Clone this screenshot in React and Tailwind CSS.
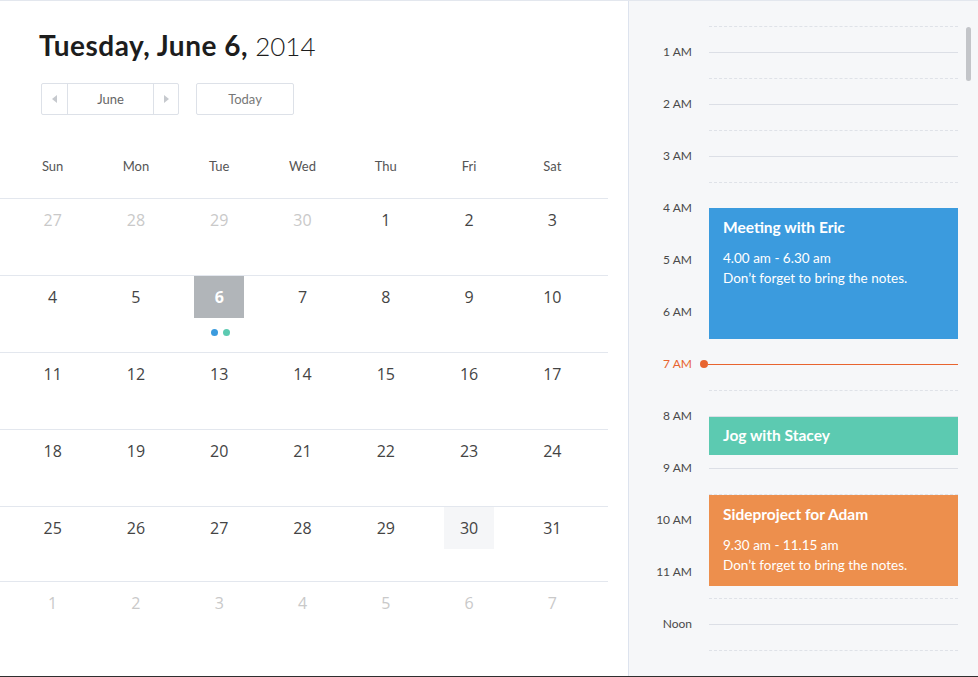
import React from 'react';

const weekdays = ['Sun', 'Mon', 'Tue', 'Wed', 'Thu', 'Fri', 'Sat'];

const weeks = [
    { h: 'h-[77px]', days: [[27, 'muted'], [28, 'muted'], [29, 'muted'], [30, 'muted'], [1], [2], [3]] },
    { h: 'h-[77px]', days: [[4], [5], [6, 'selected'], [7], [8], [9], [10]] },
    { h: 'h-[77px]', days: [[11], [12], [13], [14], [15], [16], [17]] },
    { h: 'h-[77px]', days: [[18], [19], [20], [21], [22], [23], [24]] },
    { h: 'h-[75px]', days: [[25], [26], [27], [28], [29], [30, 'hover'], [31]] },
    { h: 'h-[95px]', days: [[1, 'muted'], [2, 'muted'], [3, 'muted'], [4, 'muted'], [5, 'muted'], [6, 'muted'], [7, 'muted']] },
];

// index = hour of the day; the first one sits under the top edge
const hours = ['', '1 AM', '2 AM', '3 AM', '4 AM', '5 AM', '6 AM', '7 AM', '8 AM', '9 AM', '10 AM', '11 AM', 'Noon'];

const events = [
    { title: 'Meeting with Eric', time: '4.00 am - 6.30 am', note: "Don\u2019t forget to bring the notes.", top: 207, height: 131, color: 'bg-[#3b9bde]' },
    { title: 'Jog with Stacey', top: 416, height: 38, color: 'bg-[#5ccab1]' },
    { title: 'Sideproject for Adam', time: '9.30 am - 11.15 am', note: "Don\u2019t forget to bring the notes.", top: 494, height: 91, color: 'bg-[#ed8f4d]' },
];

const DayCell = ({ n, kind }) => {
    const box = kind === 'selected'
        ? 'bg-[#b1b5b9] text-white font-bold'
        : kind === 'hover'
            ? 'bg-[#f5f6f8] text-[#444]'
            : kind === 'muted'
                ? 'text-[#c9c9c9]'
                : 'text-[#444]';
    return (
        <div className="flex flex-col items-center">
            <div className={`w-[50px] h-[42px] flex items-center justify-center text-[16px] ${box}`}>{n}</div>
            {kind === 'selected' && (
                <div className="flex gap-[5px] mt-[11px] ml-[2px]">
                    <span className="w-[7px] h-[7px] rounded-full bg-[#3b9bde]"></span>
                    <span className="w-[7px] h-[7px] rounded-full bg-[#5ccab1]"></span>
                </div>
            )}
        </div>
    );
};

export default function App() {
    const rows = [];
    hours.forEach((label, h) => {
        rows.push({ type: 'hour', label, h });
        rows.push({ type: 'half', h });
    });

    return (
        <div className="w-[978px] h-[677px] flex bg-white border-t border-b border-t-[#e3e7ee] border-b-[#2f2f2f] overflow-hidden" style={{ fontFamily: 'Lato, "Open Sans", sans-serif' }}>
            {/* CALENDAR */}
            <div className="w-[628px] shrink-0 flex flex-col">
                <h1 className="pl-[39px] pt-[27px] text-[28px] leading-[34px] text-[#1d1d1d]">
                    <span className="font-bold tracking-[0.5px]">Tuesday, June 6,</span> <span className="font-light text-[26px]">2014</span>
                </h1>

                <div className="flex gap-[17px] pl-[41px] mt-[20px]">
                    <div className="flex h-[32px] w-[138px] border border-[#dde1e8] rounded-[2px] text-[13px] text-[#666]">
                        <div className="w-[26px] flex items-center justify-center border-r border-[#dde1e8]">
                            <span className="w-0 h-0 border-y-[4px] border-y-transparent border-r-[5px] border-r-[#c6c9ce]"></span>
                        </div>
                        <div className="flex-1 flex items-center justify-center pt-px">June</div>
                        <div className="w-[25px] flex items-center justify-center border-l border-[#dde1e8]">
                            <span className="w-0 h-0 border-y-[4px] border-y-transparent border-l-[5px] border-l-[#c6c9ce]"></span>
                        </div>
                    </div>
                    <div className="h-[32px] w-[98px] border border-[#dde1e8] rounded-[2px] flex items-center justify-center pt-px text-[13px] text-[#777]">Today</div>
                </div>

                <div className="w-[608px] grid grid-cols-7 pl-[11px] pr-[14px] mt-[33px] h-[40px] items-center text-[13px] text-[#555]">
                    {weekdays.map((d) => (
                        <div key={d} className="text-center">{d}</div>
                    ))}
                </div>

                <div className="w-[608px] mt-[13px]" style={{ fontFamily: '"Open Sans", sans-serif' }}>
                    {weeks.map((w, i) => (
                        <div key={i} className={`${w.h} border-t border-[#e3e7ee] grid grid-cols-7 pl-[11px] pr-[14px] items-start`}>
                            {w.days.map(([n, kind], j) => (
                                <DayCell key={j} n={n} kind={kind} />
                            ))}
                        </div>
                    ))}
                </div>
            </div>

            {/* DAY TIMELINE */}
            <div className="flex-1 relative bg-[#f6f7f9] border-l border-[#dde3ee] overflow-hidden">
                <div className="-mt-[14px]">
                    {rows.map((r, i) => {
                        const now = r.type === 'hour' && r.h === 7;
                        return (
                            <div key={i} className="h-[26px] flex items-center">
                                <div className={`w-[63px] text-right text-[12px] ${now ? 'text-[#e8642f]' : 'text-[#4a4a4a]'}`}>
                                    {r.type === 'hour' ? r.label : ''}
                                </div>
                                <div className="flex-1 pr-[20px] flex items-center">
                                    {now ? (
                                        <div className="flex-1 flex items-center ml-[8px]">
                                            <span className="w-[8px] h-[8px] rounded-full bg-[#e8642f] shrink-0"></span>
                                            <span className="flex-1 h-px bg-[#e8642f]"></span>
                                        </div>
                                    ) : (
                                        <div className={`flex-1 ml-[17px] ${r.type === 'hour' ? 'border-t border-[#dcdfe6]' : 'border-t border-dashed border-[#dfe2e8]'}`}></div>
                                    )}
                                </div>
                            </div>
                        );
                    })}
                </div>

                {events.map((e) => (
                    <div
                        key={e.title}
                        className={`absolute left-[80px] right-[20px] ${e.color} text-white px-[14px] ${e.time ? 'pt-[10px]' : 'flex items-center pb-[2px]'}`}
                        style={{ top: e.top, height: e.height }}
                    >
                        <div className="text-[15.5px] leading-[18px] font-bold">{e.title}</div>
                        {e.time && (
                            <div className="mt-[12px] text-[13.5px] leading-[20px]">
                                <div>{e.time}</div>
                                <div>{e.note}</div>
                            </div>
                        )}
                    </div>
                ))}

                <div className="absolute right-[7px] top-[26px] w-[5px] h-[54px] rounded-full bg-[#c3c5c9]"></div>
            </div>
        </div>
    );
}
